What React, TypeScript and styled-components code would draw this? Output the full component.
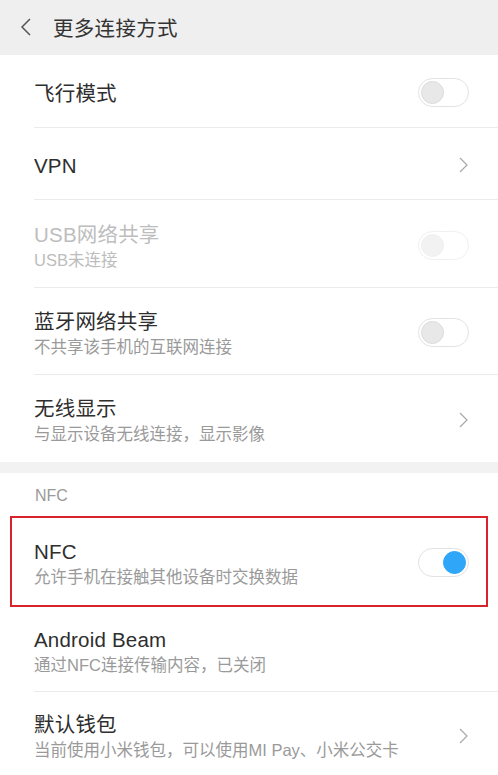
import styled, { createGlobalStyle } from 'styled-components'

const GlobalStyle = createGlobalStyle`
  html, body {
    margin: 0;
    padding: 0;
    background: #ffffff;
  }

  body {
    font-family: 'Liberation Sans', 'Noto Sans CJK SC', sans-serif;
    -webkit-font-smoothing: antialiased;
  }
`

const Page = styled.div`
  display: flex;
  flex-direction: column;
  width: 498px;
  height: 775px;
  overflow: hidden;
  background: #ffffff;
`

const Header = styled.header`
  align-items: center;
  background: #efefef;
  box-sizing: border-box;
  display: flex;
  flex-shrink: 0;
  gap: 20px;
  height: 55px;
  padding: 0 0 2px 19px;
`

const BackButton = styled.svg`
  display: block;
  flex-shrink: 0;
  height: 20px;
  width: 14px;
`

const Title = styled.h1`
  color: #333333;
  font-size: 20.5px;
  font-weight: 400;
  letter-spacing: 0.3px;
  margin: 0;
`

const Row = styled.div<{ $height: number; $highlight?: boolean; $divider?: boolean }>`
  align-items: center;
  box-sizing: border-box;
  display: flex;
  flex-shrink: 0;
  height: ${({ $height }) => $height}px;
  padding: 0 29px 0 34px;
  position: relative;

  &::before {
    content: '';
    display: ${({ $divider }) => ($divider ? 'block' : 'none')};
    position: absolute;
    left: 34px;
    right: 0;
    bottom: 0;
    height: 1px;
    background: #ebebeb;
  }

  &::after {
    content: '';
    display: ${({ $highlight }) => ($highlight ? 'block' : 'none')};
    position: absolute;
    left: 10px;
    right: 10px;
    top: 0;
    bottom: 0;
    border: 2px solid #d8232c;
    pointer-events: none;
  }
`

const Texts = styled.div`
  display: flex;
  flex: 1;
  flex-direction: column;
  min-width: 0;
  padding-top: 4px;
`

const RowTitle = styled.div<{ $disabled?: boolean }>`
  color: ${({ $disabled }) => ($disabled ? '#bdbdbd' : '#2e2e2e')};
  font-size: 20.5px;
  line-height: 26px;
  letter-spacing: 0.2px;
`

const RowSub = styled.div<{ $disabled?: boolean }>`
  color: ${({ $disabled }) => ($disabled ? '#bdbdbd' : '#9a9a9a')};
  font-size: 16.5px;
  line-height: 22px;
  margin-top: 1px;
`

const Switch = styled.div<{ $on?: boolean; $disabled?: boolean }>`
  align-items: center;
  background: #ffffff;
  border: 1px solid ${({ $disabled }) => ($disabled ? '#f0f0f0' : '#e2e2e2')};
  border-radius: 15px;
  box-sizing: border-box;
  display: flex;
  flex-shrink: 0;
  height: 29px;
  justify-content: ${({ $on }) => ($on ? 'flex-end' : 'flex-start')};
  margin-top: 2px;
  padding: 0 2px;
  width: 51px;
`

const Knob = styled.div<{ $on?: boolean; $disabled?: boolean }>`
  background: ${({ $on, $disabled }) => ($on ? '#2fa6f7' : $disabled ? '#f2f2f2' : '#e8e8e8')};
  border: 1px solid ${({ $on, $disabled }) => ($on ? '#2fa6f7' : $disabled ? '#f0f0f0' : '#dcdcdc')};
  border-radius: 50%;
  box-sizing: border-box;
  height: 23px;
  width: 23px;
`

const Chevron = styled.svg`
  display: block;
  flex-shrink: 0;
  height: 16px;
  margin: 2px 1px 0 0;
  width: 9px;
`

const Gap = styled.div`
  background: #f2f2f2;
  flex-shrink: 0;
  height: 11px;
`

const SectionLabel = styled.div`
  align-items: center;
  box-sizing: border-box;
  color: #9a9a9a;
  display: flex;
  flex-shrink: 0;
  font-size: 16px;
  height: 43px;
  padding: 2px 0 0 35px;
`

type Item = {
  title: string
  sub?: string
  control: 'switch' | 'chevron' | 'none'
  height: number
  on?: boolean
  disabled?: boolean
  highlight?: boolean
  divider?: boolean
}

const connections: Item[] = [
  { title: '飞行模式', control: 'switch', height: 73, divider: true },
  { title: 'VPN', control: 'chevron', height: 72, divider: true },
  { title: 'USB网络共享', sub: 'USB未连接', control: 'switch', height: 88, disabled: true, divider: true },
  { title: '蓝牙网络共享', sub: '不共享该手机的互联网连接', control: 'switch', height: 87, divider: true },
  { title: '无线显示', sub: '与显示设备无线连接，显示影像', control: 'chevron', height: 87 },
]

const nfc: Item[] = [
  { title: 'NFC', sub: '允许手机在接触其他设备时交换数据', control: 'switch', height: 91, on: true, highlight: true },
  { title: 'Android Beam', sub: '通过NFC连接传输内容，已关闭', control: 'none', height: 85, divider: true },
  { title: '默认钱包', sub: '当前使用小米钱包，可以使用MI Pay、小米公交卡', control: 'chevron', height: 85 },
]

const SettingRow = ({ item }: { item: Item }) => (
  <Row $height={item.height} $highlight={item.highlight} $divider={item.divider}>
    <Texts>
      <RowTitle $disabled={item.disabled}>{item.title}</RowTitle>
      {item.sub && <RowSub $disabled={item.disabled}>{item.sub}</RowSub>}
    </Texts>
    {item.control === 'switch' && (
      <Switch $on={item.on} $disabled={item.disabled}>
        <Knob $on={item.on} $disabled={item.disabled} />
      </Switch>
    )}
    {item.control === 'chevron' && (
      <Chevron viewBox="0 0 9 16">
        <path d="M1 1l7 7-7 7" fill="none" stroke="#a8a8a8" strokeWidth="1.2" />
      </Chevron>
    )}
  </Row>
)

export default function App() {
  return (
    <>
      <GlobalStyle />
      <Page>
        <Header>
          <BackButton viewBox="0 0 14 20">
            <path d="M11 2L3 10l8 8" fill="none" stroke="#555555" strokeWidth="1.5" />
          </BackButton>
          <Title>更多连接方式</Title>
        </Header>
        {connections.map((item) => (
          <SettingRow item={item} key={item.title} />
        ))}
        <Gap />
        <SectionLabel>NFC</SectionLabel>
        {nfc.map((item) => (
          <SettingRow item={item} key={item.title} />
        ))}
      </Page>
    </>
  )
}
